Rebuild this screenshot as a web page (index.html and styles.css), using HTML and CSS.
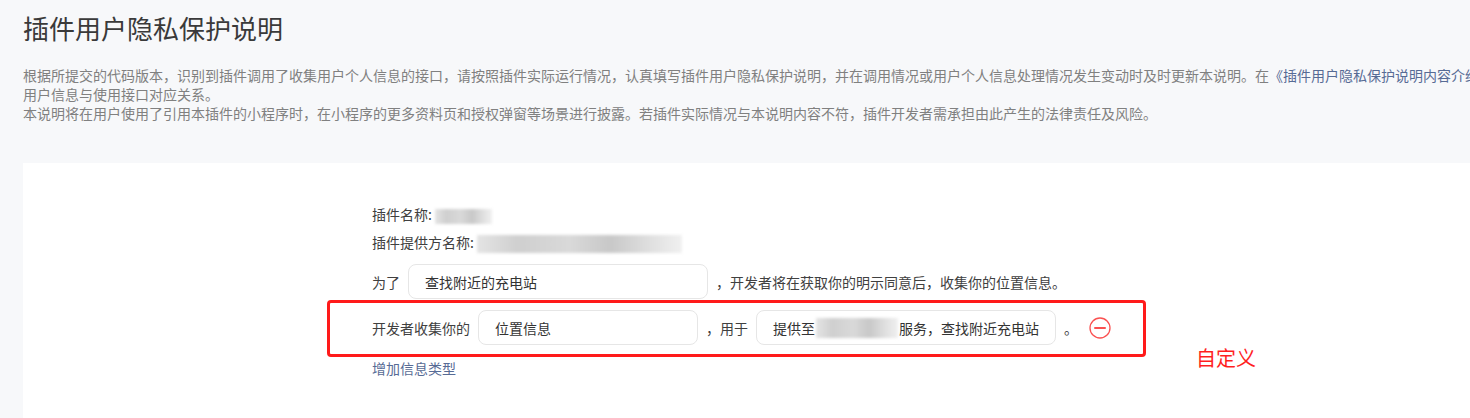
FILE: index.html
```html
<!DOCTYPE html>
<html lang="zh-CN">
<head>
    <meta charset="UTF-8">
    <meta name="viewport" content="width=device-width, initial-scale=1.0">
    <title>插件用户隐私保护说明</title>
    <link rel="stylesheet" href="styles.css">
</head>
<body>
    <div class="page">
        <h1 class="title">插件用户隐私保护说明</h1>
        <p class="desc">
            根据所提交的代码版本，识别到插件调用了收集用户个人信息的接口，请按照插件实际运行情况，认真填写插件用户隐私保护说明，并在调用情况或用户个人信息处理情况发生变动时及时更新本说明。在<a class="link" href="#">《插件用户隐私保护说明内容介绍》</a>中查看插件调用的接口与收集的<br>
            用户信息与使用接口对应关系。<br>
            本说明将在用户使用了引用本插件的小程序时，在小程序的更多资料页和授权弹窗等场景进行披露。若插件实际情况与本说明内容不符，插件开发者需承担由此产生的法律责任及风险。
        </p>

        <div class="card">
            <div class="form">
                <div class="info">插件名称: <span class="mask mask-name"></span></div>
                <div class="info">插件提供方名称: <span class="mask mask-provider"></span></div>

                <div class="row">
                    <span class="label">为了</span>
                    <div class="input input-wide">查找附近的充电站</div>
                    <span class="label">，开发者将在获取你的明示同意后，收集你的位置信息。</span>
                </div>

                <div class="row row-item">
                    <span class="label">开发者收集你的</span>
                    <div class="input input-short">位置信息</div>
                    <span class="label">，用于</span>
                    <div class="input input-wide">提供至<span class="mask mask-inline"></span>服务，查找附近充电站</div>
                    <span class="label">。</span>
                    <button class="remove" title="删除">
                        <svg width="22" height="22" viewBox="0 0 22 22">
                            <circle cx="11" cy="11" r="10" fill="none" stroke="#fa5151" stroke-width="1.3"/>
                            <line x1="6" y1="11" x2="16" y2="11" stroke="#fa5151" stroke-width="2" stroke-linecap="round"/>
                        </svg>
                    </button>
                </div>

                <a class="add" href="#">增加信息类型</a>
            </div>

            <!-- annotation -->
            <div class="note-box"></div>
            <div class="note-text">自定义</div>
        </div>
    </div>
</body>
</html>
```

FILE: styles.css
```css
body {
    margin: 0;
    background: #f7f8fa;
    font-family: "Noto Sans CJK SC", "Noto Sans", sans-serif;
    color: #353535;
    overflow: hidden;
}
.page {
    padding: 10px 0 0 23px;
}
.title {
    margin: 0;
    font-size: 26px;
    font-weight: normal;
    line-height: 36px;
    color: #3a3a3a;
}
.desc {
    margin: 20px 0 0;
    font-size: 14px;
    line-height: 19px;
    color: #808080;
    white-space: nowrap;
    overflow: hidden;
}
.link {
    color: #576b95;
    text-decoration: none;
}
.card {
    position: relative;
    margin-top: 40px;
    height: 256px;
    background: #fff;
    padding: 37px 0 0 349px;
    box-sizing: border-box;
}
.form {
    font-size: 14px;
    color: #404040;
}
.info {
    line-height: 28px;
}
.mask {
    display: inline-block;
    vertical-align: middle;
    background: linear-gradient(90deg, #e4e4e4, #cfcfcf 20%, #d9d9d9 45%, #c8c8c8 65%, #e0e0e0 85%, #f0f0f0);
    filter: blur(1.5px);
}
.mask-name {
    width: 57px;
    height: 15px;
}
.mask-provider {
    width: 205px;
    height: 18px;
}
.mask-inline {
    width: 82px;
    height: 20px;
    margin: 0 1px;
}
.row {
    display: flex;
    align-items: center;
    gap: 8px;
    margin-top: 8px;
}
.row-item {
    margin-top: 11px;
}
.label {
    line-height: 20px;
}
.input {
    display: flex;
    align-items: center;
    height: 35px;
    padding: 0 16px;
    box-sizing: border-box;
    border: 1px solid #e6e6e6;
    border-radius: 8px;
    color: #333;
}
.input-wide {
    width: 300px;
}
.input-short {
    width: 220px;
}
.remove {
    display: flex;
    padding: 0;
    margin-left: 3px;
    border: 0;
    background: none;
    cursor: pointer;
}
.add {
    display: inline-block;
    margin-top: 9px;
    line-height: 28px;
    color: #576b95;
    text-decoration: none;
}
.note-box {
    position: absolute;
    left: 304px;
    top: 137px;
    width: 819px;
    height: 57px;
    box-sizing: border-box;
    border: 3px solid #ff1a1a;
    border-radius: 4px;
}
.note-text {
    position: absolute;
    left: 1173px;
    top: 181px;
    font-size: 20px;
    line-height: 28px;
    color: #ff1f1f;
}
```
